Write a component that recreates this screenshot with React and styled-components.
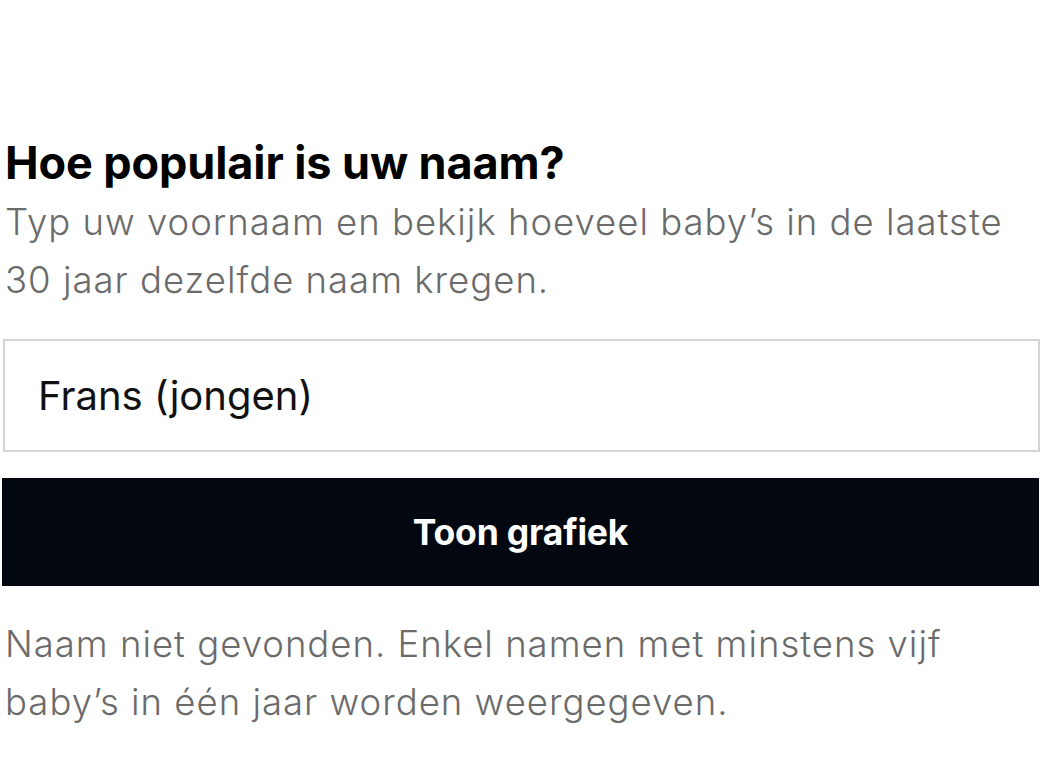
import React from 'react';
import styled, { createGlobalStyle } from 'styled-components';

const GlobalStyle = createGlobalStyle`
  body {
    margin: 0;
    background: #fff;
    font-family: Inter, "Open Sans", sans-serif;
    font-variant-ligatures: none;
  }
`;

const Container = styled.div`
  padding: 133px 21px 0 3px;
`;

const Title = styled.h2`
  margin: 0 0 0 2px;
  font-size: 45px;
  line-height: 60px;
  font-weight: 700;
  letter-spacing: -0.1px;
  color: #000;
`;

const Copy = styled.p`
  margin: ${(p) => p.$margin};
  font-size: 36.5px;
  line-height: 58px;
  font-weight: 300;
  letter-spacing: 1px;
  color: #6b6b6b;
`;

const NameInput = styled.input`
  display: block;
  box-sizing: border-box;
  width: 100%;
  height: 113px;
  margin: 0;
  padding: 0 33px;
  border: 2px solid #d4d4d4;
  border-radius: 0;
  font-family: inherit;
  font-size: 40px;
  font-weight: 400;
  color: #111;
  outline: none;
`;

const SubmitButton = styled.button`
  display: block;
  box-sizing: border-box;
  width: 100%;
  height: 108px;
  margin: 26px 0 0 -1px;
  border: none;
  border-radius: 0;
  background: #03070f;
  color: #fff;
  font-family: inherit;
  font-size: 35.5px;
  font-weight: 700;
  letter-spacing: -0.2px;
  cursor: pointer;
`;

function App() {
  return (
    <>
      <GlobalStyle />
      <Container>
        <Title>Hoe populair is uw naam?</Title>
        <Copy $margin="0 0 30px 2px">
          Typ uw voornaam en bekijk hoeveel baby’s in de laatste 30 jaar dezelfde naam kregen.
        </Copy>
        <NameInput type="text" defaultValue="Frans (jongen)" />
        <SubmitButton type="button">Toon grafiek</SubmitButton>
        <Copy $margin="29px 0 0 2px">
          Naam niet gevonden. Enkel namen met minstens vijf baby’s in één jaar worden weergegeven.
        </Copy>
      </Container>
    </>
  );
}

export default App;
